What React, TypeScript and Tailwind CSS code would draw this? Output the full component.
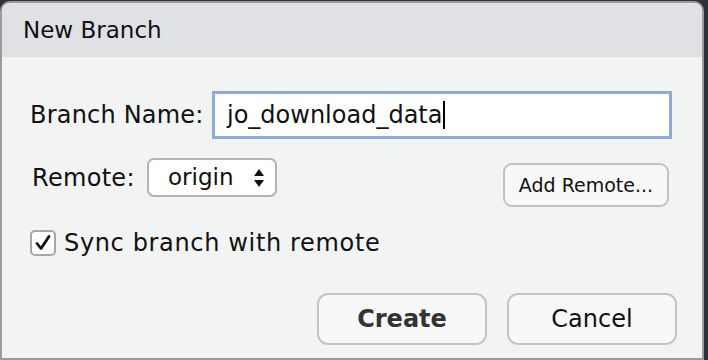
import React from "react";

export default function App() {
  return (
    <div className="w-[708px] h-[360px] bg-[#2e333b] pt-[1px] pr-[4px] overflow-hidden font-['DejaVu_Sans',sans-serif] text-[#111]">
      <div className="h-[359px] border-2 border-[#9b9b9b] rounded-t-[10px] bg-[#f2f3f3] flex flex-col overflow-hidden">
        <div className="h-[54px] shrink-0 bg-[#e0e1e5] flex items-center pl-[21px] text-[23px]">
          New Branch
        </div>
        <div className="flex flex-col pl-[28px]">
          <div className="mt-[34px] flex items-center h-[48px]">
            <div className="w-[182px] text-[24px] tracking-[0.2px]">Branch Name:</div>
            <div className="w-[460px] h-[48px] border-[3px] border-[#8eaadc] bg-white flex items-center pl-[12px] text-[24px]">
              <span>jo_download_data</span>
              <span className="w-[2px] h-[28px] bg-black ml-[1px]" />
            </div>
          </div>
          <div className="mt-[19px] flex items-start h-[49px]">
            <div className="w-[117px] h-[39px] flex items-center pl-[2px] text-[24px] tracking-[0.3px]">Remote:</div>
            <div className="w-[130px] h-[39px] rounded-[7px] border-2 border-[#b4b4b4] bg-white flex items-center pl-[19px] pr-[10px] text-[23px]">
              <span className="flex-1">origin</span>
              <svg width="12" height="20" viewBox="0 0 12 20">
                <polygon points="6,1 11,8 1,8" fill="#111" />
                <polygon points="1,12 11,12 6,19" fill="#111" />
              </svg>
            </div>
            <div className="ml-[226px] mt-[5px] w-[166px] h-[44px] rounded-[9px] border-2 border-[#c2c2c2] bg-[#f8f8f8] flex items-center justify-center text-[19px]">
              Add Remote...
            </div>
          </div>
          <div className="mt-[23px] flex items-center h-[26px]">
            <div className="w-[26px] h-[26px] rounded-[5px] border-2 border-[#a6a6a6] bg-white flex items-center justify-center">
              <svg width="18" height="18" viewBox="0 0 18 18">
                <path d="M3 9.5 L7 14.5 L15 2.5" fill="none" stroke="#111" strokeWidth="2.8" strokeLinecap="round" strokeLinejoin="round" />
              </svg>
            </div>
            <span className="ml-[8px] text-[24px] tracking-[0.65px]">Sync branch with remote</span>
          </div>
          <div className="mt-[37px] flex justify-end gap-[20px] pr-[25px]">
            <div className="w-[170px] h-[52px] rounded-[11px] border-2 border-[#c4c4c4] bg-[#f8f8f8] flex items-center justify-center text-[24px] font-bold text-[#333]">
              Create
            </div>
            <div className="w-[170px] h-[52px] rounded-[11px] border-2 border-[#c4c4c4] bg-[#f8f8f8] flex items-center justify-center text-[24px]">
              Cancel
            </div>
          </div>
        </div>
      </div>
    </div>
  );
}
